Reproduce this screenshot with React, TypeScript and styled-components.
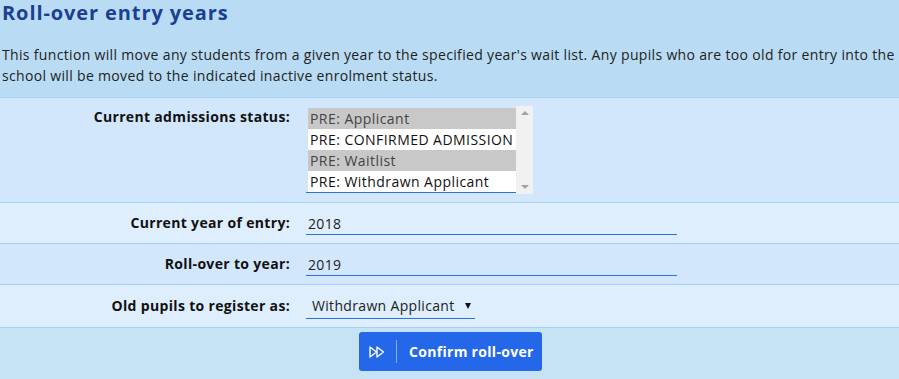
import styled, { createGlobalStyle } from 'styled-components';

const GlobalStyle = createGlobalStyle`
  html, body {
    margin: 0;
    padding: 0;
    background: #c6e3f5;
    font-family: 'Open Sans', 'Liberation Sans', sans-serif;
    color: #222;
  }
`;

const Page = styled.div`
  width: 899px;
  min-height: 379px;
  background: #c6e3f5;
  letter-spacing: 0.33px;
`;

const Header = styled.header`
  background: #b9dcf4;
  padding: 0 2px 0 2px;
  border-bottom: 1px solid #a6d2f6;
`;

const Title = styled.h1`
  margin: 0;
  font-size: 20px;
  line-height: 26px;
  font-weight: 700;
  letter-spacing: 0.9px;
  color: #1c3f93;
`;

const Intro = styled.p`
  margin: 18px 0 0;
  padding-bottom: 11px;
  font-size: 14px;
  line-height: 21px;
  color: #222;
`;

const Row = styled.div<{ $alt?: boolean; $tall?: boolean }>`
  display: grid;
  grid-template-columns: 290px 1fr;
  column-gap: 16px;
  align-items: ${p => (p.$tall ? 'start' : 'center')};
  padding: 8px 0;
  min-height: 24px;
  background: ${p => (p.$alt ? '#deeefd' : '#d2e7fb')};
  border-bottom: 1px solid #a6d2f6;
`;

const Label = styled.label<{ $tall?: boolean }>`
  text-align: right;
  font-size: 14px;
  font-weight: 700;
  color: #111;
  line-height: 20px;
  padding-top: ${p => (p.$tall ? '1px' : '0')};
`;

const ListWrap = styled.div`
  display: flex;
  align-items: flex-start;
`;

const ListBox = styled.div`
  width: 208px;
  margin-top: 2px;
  padding-left: 2px;
  border-bottom: 1px solid #2b6fe0;
`;

const Option = styled.div<{ $selected?: boolean }>`
  height: 21px;
  line-height: 21px;
  padding-left: 2px;
  font-size: 14px;
  letter-spacing: 0.45px;
  white-space: nowrap;
  overflow: hidden;
  color: ${p => (p.$selected ? '#444' : '#111')};
  background: ${p => (p.$selected ? '#c8c8c8' : '#fff')};
`;

const Scrollbar = styled.div`
  width: 17px;
  height: 88px;
  background: #f1f1f1;
  display: flex;
  flex-direction: column;
  justify-content: space-between;
  align-items: center;
  padding: 5px 0;
  box-sizing: border-box;
`;

const Arrow = styled.span<{ $down?: boolean }>`
  width: 0;
  height: 0;
  border-left: 4px solid transparent;
  border-right: 4px solid transparent;
  ${p =>
    p.$down
      ? 'border-top: 4px solid #a3a3a3;'
      : 'border-bottom: 4px solid #a3a3a3;'}
`;

const TextInput = styled.input`
  width: 371px;
  box-sizing: border-box;
  border: none;
  border-bottom: 1px solid #2b6fe0;
  background: transparent;
  font-family: inherit;
  font-size: 14px;
  letter-spacing: 0.33px;
  line-height: 19px;
  height: 23px;
  color: #222;
  padding: 2px 2px 1px;
  outline: none;
`;

const SelectBox = styled.div`
  display: inline-flex;
  align-items: center;
  width: 169px;
  height: 26px;
  box-sizing: border-box;
  border-bottom: 1px solid #2b6fe0;
  padding: 3px 0 3px 6px;
  font-size: 14px;
  line-height: 19px;
  color: #222;
  justify-self: start;
`;

const SelectArrow = styled.span`
  margin-left: 10px;
  width: 0;
  height: 0;
  border-left: 3.5px solid transparent;
  border-right: 3.5px solid transparent;
  border-top: 6px solid #111;
`;

const Footer = styled.div`
  display: flex;
  justify-content: center;
  padding: 4px 0 8px 2px;
`;

const Button = styled.button`
  display: inline-flex;
  align-items: center;
  height: 39px;
  width: 183px;
  box-sizing: border-box;
  padding: 0 6px 0 10px;
  border: none;
  border-radius: 3px;
  background: #2467e8;
  color: #fff;
  font-family: inherit;
  font-size: 14px;
  font-weight: 700;
  letter-spacing: 0.3px;
  white-space: nowrap;
  cursor: pointer;
`;

const Divider = styled.span`
  flex: none;
  width: 1px;
  height: 23px;
  background: rgba(255, 255, 255, 0.45);
  margin: 0 12px 0 11px;
`;

const FastForward = () => (
  <svg width="16" height="12" viewBox="0 0 16 12" fill="none" stroke="#fff" strokeWidth="1.4" strokeLinejoin="round" style={{ flex: 'none' }}>
    <path d="M1 1 L7.5 6 L1 11 Z" />
    <path d="M8 1 L14.5 6 L8 11 Z" />
  </svg>
);

const statuses = [
  { name: 'PRE: Applicant', selected: true },
  { name: 'PRE: CONFIRMED ADMISSION', selected: false },
  { name: 'PRE: Waitlist', selected: true },
  { name: 'PRE: Withdrawn Applicant', selected: false },
];

export default function App() {
  return (
    <Page>
      <GlobalStyle />
      <Header>
        <Title>Roll-over entry years</Title>
        <Intro>
          This function will move any students from a given year to the specified year's wait list. Any pupils who are too old
          for entry into the school will be moved to the indicated inactive enrolment status.
        </Intro>
      </Header>

      <Row $tall>
        <Label $tall>Current admissions status:</Label>
        <ListWrap>
          <ListBox>
            {statuses.map(s => (
              <Option key={s.name} $selected={s.selected}>
                {s.name}
              </Option>
            ))}
          </ListBox>
          <Scrollbar>
            <Arrow />
            <Arrow $down />
          </Scrollbar>
        </ListWrap>
      </Row>

      <Row $alt>
        <Label>Current year of entry:</Label>
        <TextInput defaultValue="2018" />
      </Row>

      <Row>
        <Label>Roll-over to year:</Label>
        <TextInput defaultValue="2019" />
      </Row>

      <Row $alt>
        <Label>Old pupils to register as:</Label>
        <SelectBox>
          Withdrawn Applicant
          <SelectArrow />
        </SelectBox>
      </Row>

      <Footer>
        <Button>
          <FastForward />
          <Divider />
          Confirm roll-over
        </Button>
      </Footer>
    </Page>
  );
}
